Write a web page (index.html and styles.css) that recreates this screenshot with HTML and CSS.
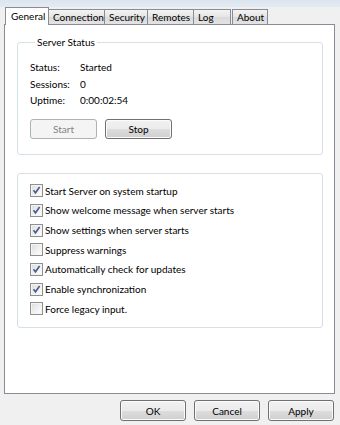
FILE: index.html
```html
<!DOCTYPE html>
<html lang="en">
<head>
    <meta charset="UTF-8">
    <meta name="viewport" content="width=device-width, initial-scale=1.0">
    <title>Server Settings</title>
    <link rel="stylesheet" href="styles.css">
</head>
<body>
    <div class="dialog">
        <div class="tabs">
            <div class="tab active tab-general">General</div>
            <div class="tab tab-connection">Connection</div>
            <div class="tab tab-security">Security</div>
            <div class="tab tab-remotes">Remotes</div>
            <div class="tab tab-log">Log</div>
            <div class="tab tab-about">About</div>
        </div>

        <div class="panel">
            <fieldset class="group group-status">
                <legend class="group-title">Server Status</legend>
                <div class="status-row">
                    <span class="status-label">Status:</span>
                    <span>Started</span>
                </div>
                <div class="status-row">
                    <span class="status-label">Sessions:</span>
                    <span>0</span>
                </div>
                <div class="status-row">
                    <span class="status-label">Uptime:</span>
                    <span>0:00:02:54</span>
                </div>
                <div class="button-row">
                    <button class="button" disabled>Start</button>
                    <button class="button">Stop</button>
                </div>
            </fieldset>

            <fieldset class="group group-options">
                <label class="check-row">
                    <span class="checkbox checked"></span>
                    Start Server on system startup
                </label>
                <label class="check-row">
                    <span class="checkbox checked"></span>
                    Show welcome message when server starts
                </label>
                <label class="check-row">
                    <span class="checkbox checked"></span>
                    Show settings when server starts
                </label>
                <label class="check-row">
                    <span class="checkbox"></span>
                    Suppress warnings
                </label>
                <label class="check-row">
                    <span class="checkbox checked"></span>
                    Automatically check for updates
                </label>
                <label class="check-row">
                    <span class="checkbox checked"></span>
                    Enable synchronization
                </label>
                <label class="check-row">
                    <span class="checkbox"></span>
                    Force legacy input.
                </label>
            </fieldset>
        </div>

        <div class="footer">
            <button class="button">OK</button>
            <button class="button">Cancel</button>
            <button class="button">Apply</button>
        </div>
    </div>
</body>
</html>
```

FILE: styles.css
```css
body {
    margin: 0;
    font-family: Lato, "Liberation Sans", sans-serif;
    font-size: 10px;
    color: #000;
    background: linear-gradient(#dce5ef 0, #e3eaf2 7px, #f0f0f0 7px);
}

.dialog {
    width: 340px;
    height: 425px;
    display: flex;
    flex-direction: column;
}

/* tab strip */

.tabs {
    display: flex;
    align-items: flex-end;
    height: 24px;
    padding-left: 5px;
    box-sizing: border-box;
}

.tab {
    height: 15px;
    line-height: 14px;
    padding-left: 4px;
    box-sizing: border-box;
    border: 1px solid #898c95;
    border-bottom: none;
    margin-left: -1px;
    background: linear-gradient(#f3f3f3, #e5e5e5 50%, #dadada 51%, #e3e3e3);
}

.tab:first-child {
    margin-left: 0;
}

.tab.active {
    position: relative;
    z-index: 1;
    height: 18px;
    line-height: 16px;
    margin-bottom: -1px;
    padding-left: 5px;
    background: #fff;
}

.tab-general { width: 44px; }
.tab-connection { width: 57px; }
.tab-security { width: 44px; }
.tab-remotes { width: 47px; }
.tab-log { width: 38px; }
.tab-about { width: 36px; margin-left: 1px; }

/* page */

.panel {
    margin-left: 4px;
    width: 331px;
    height: 370px;
    box-sizing: border-box;
    border: 1px solid #898c95;
    background: #fff;
    padding: 11px 0 0 12px;
}

.group {
    width: 306px;
    margin: 0;
    padding: 0 0 0 12px;
    box-sizing: border-box;
    border: 1px solid #d5dfe5;
    border-radius: 3px;
    min-inline-size: 0;
}

.group-title {
    margin-left: 5px;
    padding: 0 2px;
    line-height: 12px;
}

.group-status {
    padding-top: 11px;
    padding-bottom: 15px;
}

.status-row {
    display: flex;
    height: 16.5px;
    line-height: 16.5px;
}

.status-label {
    width: 50px;
}

.button-row {
    display: flex;
    gap: 8px;
    margin-top: 10.5px;
}

.group-options {
    margin-top: 18px;
    padding-top: 7px;
    padding-bottom: 8px;
}

.check-row {
    display: flex;
    align-items: center;
    height: 19.67px;
}

.checkbox {
    width: 13px;
    height: 13px;
    box-sizing: border-box;
    margin-right: 2px;
    border: 1px solid #8e8f8f;
    background: linear-gradient(135deg, #dcdcdc, #f6f6f6 70%, #fff);
    box-shadow: inset 0 0 0 1px #f4f4f4;
}

.checkbox.checked {
    background:
        url("data:image/svg+xml,%3Csvg xmlns='http://www.w3.org/2000/svg' width='11' height='11'%3E%3Cpath d='M2.5 5.2 L4.5 7.8 L8.6 2' fill='none' stroke='%234a5d8a' stroke-width='1.6'/%3E%3C/svg%3E") center / 11px 11px no-repeat,
        linear-gradient(135deg, #dcdcdc, #f6f6f6 70%, #fff);
}

/* buttons */

.button {
    width: 67px;
    height: 20px;
    padding: 0;
    font-family: inherit;
    font-size: 10px;
    color: #000;
    border: 1px solid #707070;
    border-radius: 3px;
    background: linear-gradient(#f2f2f2, #ebebeb 50%, #dddddd 51%, #cfcfcf);
    box-shadow: inset 0 0 0 1px #fbfbfb;
}

.button:disabled {
    color: #838383;
    border-color: #adb2b5;
    background: #f4f4f4;
    box-shadow: none;
}

.footer {
    display: flex;
    justify-content: flex-end;
    gap: 8px;
    padding-top: 6px;
    padding-right: 6px;
}

.footer .button {
    width: 66px;
    height: 21px;
}
```
